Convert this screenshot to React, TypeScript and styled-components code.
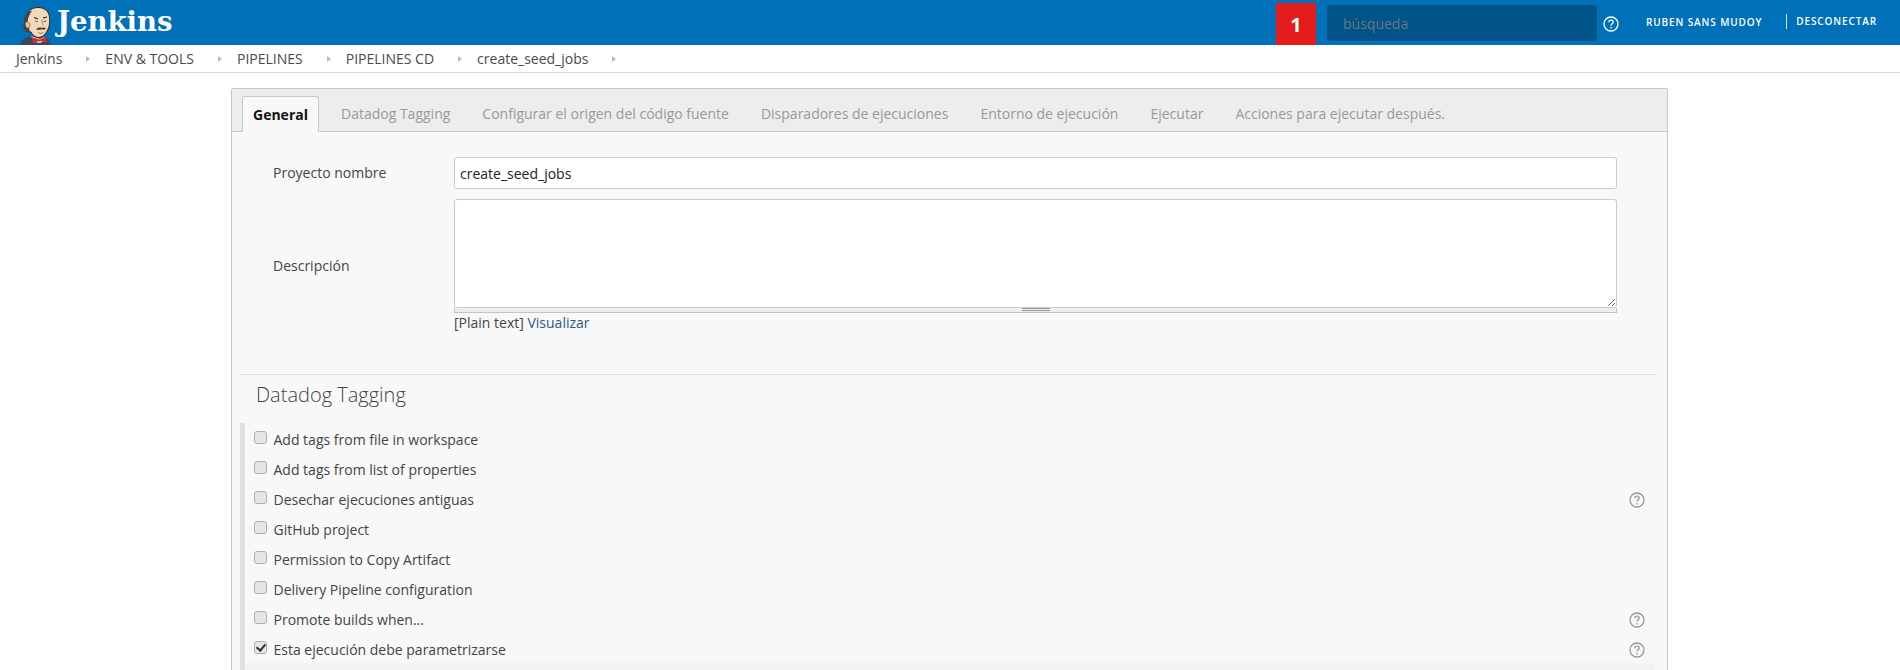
import * as React from 'react';
import styled, { createGlobalStyle } from 'styled-components';

const GlobalStyle = createGlobalStyle`
  html, body {
    margin: 0;
    padding: 0;
    background: #fff;
    overflow: hidden;
  }
  body {
    font-family: "Open Sans", "Liberation Sans", sans-serif;
    font-size: 14px;
    color: #333;
  }
`;

const Page = styled.div`
  width: 1900px;
  height: 670px;
  overflow: hidden;
`;

const Header = styled.header`
  height: 45px;
  background: #0070b9;
  display: flex;
  align-items: stretch;
  padding: 0 23px 0 19px;
`;

const Logo = styled.div`
  display: flex;
  align-items: flex-end;
  flex: 1;
`;

const LogoText = styled.span`
  font-family: "DejaVu Serif", "Liberation Serif", serif;
  font-weight: 700;
  font-size: 27.5px;
  line-height: 43px;
  align-self: flex-start;
  color: #fff;
  margin-left: 5px;
`;

const Badge = styled.div`
  width: 40px;
  height: 42px;
  margin-top: 3px;
  background: #e31b1b;
  color: #fff;
  font-weight: 700;
  font-size: 20px;
  display: flex;
  align-items: center;
  justify-content: center;
`;

const Search = styled.input`
  width: 270px;
  height: 36px;
  margin: 5px 0 0 11px;
  box-sizing: border-box;
  border: none;
  border-radius: 3px;
  background: #00548a;
  padding: 0 16px;
  font: 14px "Open Sans", sans-serif;
  &::placeholder {
    color: #6c7680;
    opacity: 1;
  }
`;

const HeaderHelp = styled.div`
  display: flex;
  align-items: center;
  margin: 3px 0 0 6px;
`;

const UserLink = styled.a`
  font-size: 10px;
  font-weight: 600;
  letter-spacing: 0.88px;
  color: #fff;
  align-self: center;
  margin-left: 27px;
  margin-top: -2px;
`;

const LogoutLink = styled(UserLink)`
  margin-left: 24px;
  padding-left: 9px;
  border-left: 1px solid #d5e6f3;
  line-height: 15px;
`;

const Breadcrumbs = styled.nav`
  height: 28px;
  box-sizing: border-box;
  border-bottom: 1px solid #d8d8d4;
  display: flex;
  align-items: center;
  padding: 0 0 0 16px;
  color: #4a4a4a;
  font-size: 14px;
`;

const Crumb = styled.span`
  display: flex;
  align-items: center;
`;

const CrumbArrow = styled.i`
  width: 0;
  height: 0;
  margin: 0 15px 0 24px;
  border-left: 4px solid #bbb;
  border-top: 3.5px solid transparent;
  border-bottom: 3.5px solid transparent;
`;

const Panel = styled.main`
  width: 1437px;
  margin: 15px 0 0 231px;
  box-sizing: border-box;
  height: 600px;
  border: 1px solid #c8c8c8;
  border-radius: 2px 2px 0 0;
  background: #f8f8f8;
`;

const TabBar = styled.div`
  height: 43px;
  box-sizing: border-box;
  padding: 7px 0 0 10px;
  background: #ededed;
  border-bottom: 1px solid #c8c8c8;
  display: flex;
`;

const Tab = styled.div<{ $active?: boolean }>`
  height: 36px;
  box-sizing: border-box;
  padding: 0 10px;
  margin-right: 12px;
  line-height: 35px;
  font-size: 14px;
  color: ${p => (p.$active ? '#111' : '#999')};
  font-weight: ${p => (p.$active ? 700 : 400)};
  ${p =>
    p.$active &&
    `
    background: #f8f8f8;
    border: 1px solid #c8c8c8;
    border-bottom: none;
    border-radius: 3px 3px 0 0;
  `}
`;

const FormRow = styled.div<{ $top: number }>`
  display: flex;
  align-items: center;
  margin-top: ${p => p.$top}px;
`;

const FieldLabel = styled.label<{ $drop: number }>`
  margin-top: ${p => p.$drop}px;
  padding-left: 41px;
  box-sizing: border-box;
  color: #444;
  flex: none;
  width: 222px;
`;

const TextInput = styled.input`
  width: 1163px;
  height: 32px;
  box-sizing: border-box;
  border: 1px solid #ccc;
  border-radius: 3px;
  padding: 0 5px;
  background: #fff;
  font: 14px "Open Sans", sans-serif;
  color: #222;
`;

const AreaWrap = styled.div`
  width: 1163px;
`;

const TextArea = styled.textarea`
  display: block;
  width: 100%;
  height: 109px;
  box-sizing: border-box;
  border: 1px solid #ccc;
  border-radius: 3px;
  background: #fff;
  resize: vertical;
  margin: 0;
`;

const Grippie = styled.div`
  height: 5px;
  box-sizing: border-box;
  background: #eee;
  border: 1px solid #c4c4c0;
  border-top: none;
  display: flex;
  justify-content: center;
`;

const GrippieMark = styled.span`
  width: 28px;
  height: 3px;
  box-sizing: border-box;
  border-top: 1px solid #999;
  border-bottom: 1px solid #999;
`;

const PreviewLine = styled.div`
  height: 19px;
  line-height: 19px;
  color: #444;
  font-size: 14px;
  margin-left: 222px;
`;

const PreviewLink = styled.a`
  color: #2c5a85;
`;

const Divider = styled.hr`
  margin: 42px 12px 0 8px;
  border: none;
  border-top: 1px solid #ddd;
`;

const SectionTitle = styled.h2`
  margin: 0 0 0 24px;
  height: 48px;
  line-height: 40px;
  font-size: 20px;
  font-weight: 300;
  color: #444;
`;

const OptionList = styled.div`
  margin-left: 8px;
  margin-right: 12px;
  border-left: 5px solid #e0e0e0;
`;

const Option = styled.div`
  height: 30px;
  display: flex;
  align-items: center;
  padding: 2px 10px 0 9px;
  box-sizing: border-box;
`;

const Check = styled.input`
  appearance: none;
  width: 13px;
  height: 13px;
  margin: -3px 6.5px 0 0;
  box-sizing: border-box;
  border: 1px solid #b0b0b0;
  border-radius: 3px;
  background: #e6e6e6;
  position: relative;
  &:checked::after {
    content: '';
    position: absolute;
    left: 3px;
    top: 0;
    width: 4px;
    height: 7px;
    border: solid #333;
    border-width: 0 2px 2px 0;
    transform: rotate(40deg);
  }
`;

const OptionLabel = styled.label`
  flex: 1;
  color: #444;
`;

const OptionHelp = styled.div`
  display: flex;
  margin-top: 2px;
`;

const Shaded = styled.div`
  height: 10px;
  background: #f3f3f3;
`;

function HelpIcon({ color, size }: { color: string; size: number }) {
  return (
    <svg width={size} height={size} viewBox="0 0 16 16" fill="none" stroke={color}>
      <circle cx="8" cy="8" r="7" strokeWidth="1.3" />
      <path d="M5.8 6.2C5.9 4.9 6.9 4.2 8 4.2c1.3 0 2.2.8 2.2 1.9 0 1.7-2.2 1.7-2.2 3.4" strokeWidth="1.3" />
      <path d="M8 11v1.4" strokeWidth="1.4" />
    </svg>
  );
}

function JenkinsHead() {
  return (
    <svg width="33" height="38" viewBox="0 0 33 38" style={{ flex: 'none', display: 'block' }}>
      {/* suit and collar */}
      <path d="M1 38c.5-3 2-6 6-7.500l5-1.500h11l4 2c2 1.500 4 4 5 7z" fill="#34495c" />
      <path d="M12 29l9 3 4-2 1 3-5 3-5-1z" fill="#f4f0ea" />
      {/* face */}
      <path d="M8 9C9 3 14 .5 19 .5c7 0 11 4 11.500 10 .3 3 .5 6-.5 9-1.500 5-4 9-8 10.500-4 1.500-8-1-10-5-3 0-5.500-3-5-6.500.3-2.500 1-3 1-4z" fill="#f2d8ba" stroke="#2a2523" strokeWidth="1" />
      {/* hair */}
      <path d="M8.500 6C5 10 4.500 13 5 16c-1.500 3 0 7 3 9l3.500 1c-1-2-1.500-4-1.500-6l-1.500-2c-.5-3 .5-7 1.500-9 1-2 1.500-3.500 3-5C10.500 4 9.500 5 8.500 6z" fill="#45403c" />
      {/* ear */}
      <path d="M7 15c2-1 4 1 4 3.500 0 2-1.500 3-3 2.500-1.500-.8-2.500-5-1-6z" fill="#e9c4a2" stroke="#6a4f3d" strokeWidth=".7" />
      {/* closed eyes and brows */}
      <path d="M15 10.500l4 1.500M24 11l4-1" stroke="#2a2523" strokeWidth="1.100" fill="none" />
      <path d="M16 14c1 .7 2 .7 3 .3M24.500 14.500c1 .2 2 0 2.800-.6" stroke="#5a4436" strokeWidth=".9" fill="none" />
      <path d="M22.500 13c.5 2 1.300 4 2 5.500" stroke="#b98a67" strokeWidth="1" fill="none" />
      {/* moustache */}
      <path d="M17 22.500c2-2 4-2.500 5.500-1.500 1.300-1 3-.8 4.500.7-1.500 1-3 1-4.500.6-1.800.7-3.800.7-5.500.2z" fill="#49372b" />
      <path d="M19 25.500c2 1 4 1 5.500.2" stroke="#8b6044" strokeWidth=".8" fill="none" />
      {/* bow tie */}
      <path d="M13 30l7 2.500 1.500-.3 6-3 .5 6.800-6-2-1 .8-1.500-.5L14 36.500z" fill="#d02f2b" />
    </svg>
  );
}

const crumbs = ['Jenkins', 'ENV & TOOLS', 'PIPELINES', 'PIPELINES CD', 'create_seed_jobs'];

const tabs = [
  'General',
  'Datadog Tagging',
  'Configurar el origen del código fuente',
  'Disparadores de ejecuciones',
  'Entorno de ejecución',
  'Ejecutar',
  'Acciones para ejecutar después.',
];

const options = [
  { label: 'Add tags from file in workspace' },
  { label: 'Add tags from list of properties' },
  { label: 'Desechar ejecuciones antiguas', help: true },
  { label: 'GitHub project' },
  { label: 'Permission to Copy Artifact' },
  { label: 'Delivery Pipeline configuration' },
  { label: 'Promote builds when...', help: true },
  { label: 'Esta ejecución debe parametrizarse', help: true, checked: true },
];

export default function App() {
  return (
    <Page>
      <GlobalStyle />
      <Header>
        <Logo>
          <JenkinsHead />
          <LogoText>Jenkins</LogoText>
        </Logo>
        <Badge>1</Badge>
        <Search placeholder="búsqueda" />
        <HeaderHelp>
          <HelpIcon color="#fff" size={16} />
        </HeaderHelp>
        <UserLink>RUBEN SANS MUDOY</UserLink>
        <LogoutLink>DESCONECTAR</LogoutLink>
      </Header>
      <Breadcrumbs>
        {crumbs.map(name => (
          <Crumb key={name}>
            {name}
            <CrumbArrow />
          </Crumb>
        ))}
      </Breadcrumbs>
      <Panel>
        <TabBar>
          {tabs.map((t, i) => (
            <Tab key={t} $active={i === 0}>
              {t}
            </Tab>
          ))}
        </TabBar>
        <FormRow $top={25}>
          <FieldLabel $drop={-2}>Proyecto nombre</FieldLabel>
          <TextInput defaultValue="create_seed_jobs" />
        </FormRow>
        <FormRow $top={10}>
          <FieldLabel $drop={19}>Descripción</FieldLabel>
          <AreaWrap>
            <TextArea />
            <Grippie>
              <GrippieMark />
            </Grippie>
          </AreaWrap>
        </FormRow>
        <PreviewLine>
          [Plain text] <PreviewLink>Visualizar</PreviewLink>
        </PreviewLine>
        <Divider />
        <SectionTitle>Datadog Tagging</SectionTitle>
        <OptionList>
          {options.map(o => (
            <Option key={o.label}>
              <Check type="checkbox" defaultChecked={o.checked} />
              <OptionLabel>{o.label}</OptionLabel>
              {o.help && (
                <OptionHelp>
                  <HelpIcon color="#999" size={16} />
                </OptionHelp>
              )}
            </Option>
          ))}
          <Shaded />
        </OptionList>
      </Panel>
    </Page>
  );
}
